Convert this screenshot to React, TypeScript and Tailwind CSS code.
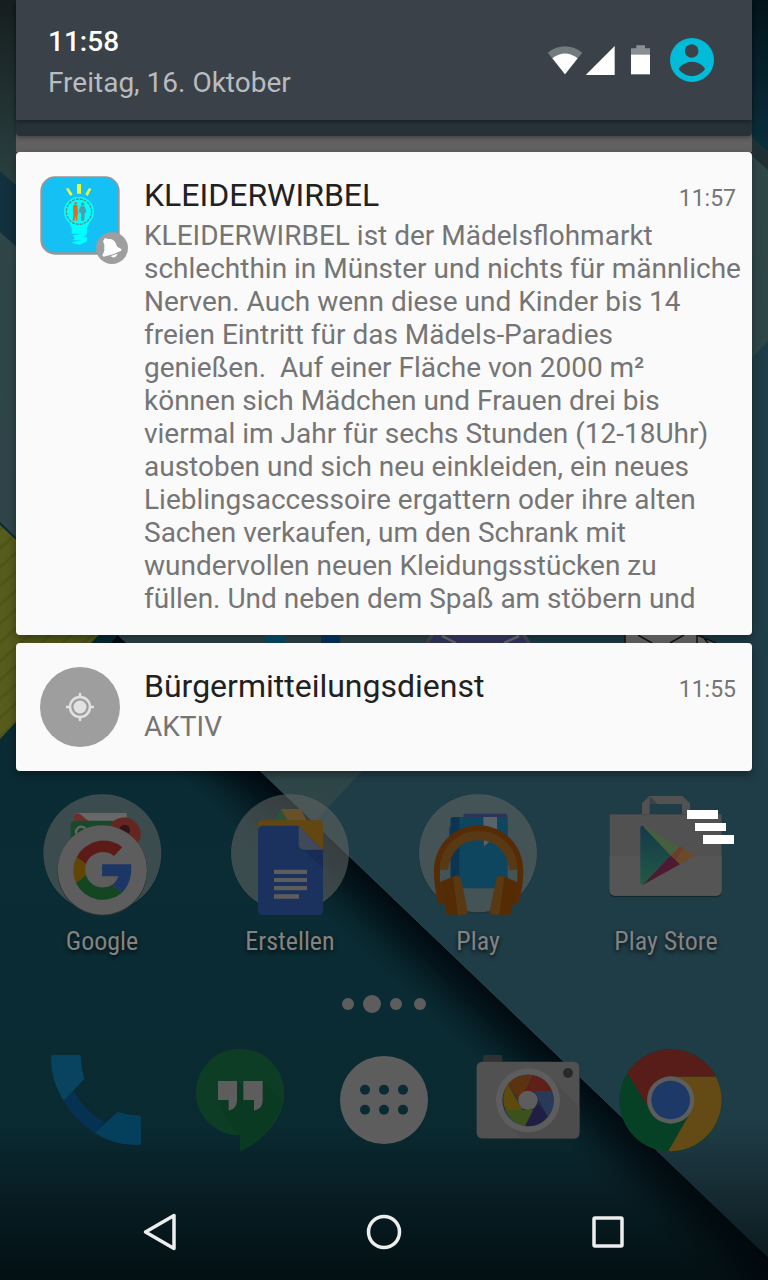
import type { ReactNode } from "react";

function Wallpaper() {
  return (
    <svg
      aria-hidden="true"
      className="absolute inset-0 h-full w-full"
      viewBox="0 0 768 1280"
      preserveAspectRatio="none"
    >
      <defs>
        <linearGradient id="wpTop" x1="0" y1="0" x2="0" y2="1">
          <stop offset="0" stopColor="#161e1f" />
          <stop offset="1" stopColor="#2d4444" />
        </linearGradient>
        <linearGradient id="wpLight" gradientUnits="userSpaceOnUse" x1="0" y1="220" x2="0" y2="820">
          <stop offset="0" stopColor="#2f4647" />
          <stop offset="0.6" stopColor="#2e444a" />
          <stop offset="1" stopColor="#2f4647" />
        </linearGradient>
        <linearGradient id="wpDeep" gradientUnits="userSpaceOnUse" x1="0" y1="740" x2="0" y2="1280">
          <stop offset="0" stopColor="#0a2b34" />
          <stop offset="0.25" stopColor="#0a2c34" />
          <stop offset="1" stopColor="#0a2931" />
        </linearGradient>
        <linearGradient id="wpShadow" gradientUnits="userSpaceOnUse" x1="443" y1="946" x2="401" y2="990">
          <stop offset="0" stopColor="#00080e" stopOpacity="0.92" />
          <stop offset="0.35" stopColor="#000a10" stopOpacity="0.65" />
          <stop offset="0.7" stopColor="#000a10" stopOpacity="0.2" />
          <stop offset="1" stopColor="#000a10" stopOpacity="0" />
        </linearGradient>
        <linearGradient id="wpFoot" gradientUnits="userSpaceOnUse" x1="0" y1="1120" x2="0" y2="1280">
          <stop offset="0" stopColor="#000608" stopOpacity="0" />
          <stop offset="1" stopColor="#000608" stopOpacity="0.72" />
        </linearGradient>
        <linearGradient id="wpRight" x1="0" y1="0" x2="0" y2="1">
          <stop offset="0" stopColor="#03131a" />
          <stop offset="1" stopColor="#0a2f3d" />
        </linearGradient>
        <pattern id="wpStripe" width="14" height="14" patternUnits="userSpaceOnUse" patternTransform="rotate(-42)">
          <rect width="14" height="14" fill="#565c1b" />
          <rect width="14" height="3" fill="#4e5517" />
        </pattern>
      </defs>
      <rect width="768" height="1280" fill="#1f3d47" />
      <path d="M0 0H768V341L752 358L314 822L0 522Z" fill="url(#wpLight)" />
      <path d="M0 0H40V206L16 185L0 171Z" fill="url(#wpTop)" />
      <path d="M0 171L40 206V268L0 232Z" fill="#12303d" />
      <path d="M730 0H768V152L730 118Z" fill="url(#wpRight)" />
      <path d="M768 152L730 118V136L768 170Z" fill="#1f3034" />
      <path d="M0 522L118 635L768 1257V1280H0Z" fill="url(#wpDeep)" />
      <path d="M118 635L768 1257V1280H660L60 700Z" fill="url(#wpShadow)" />
      <path d="M118 635L768 1257" stroke="#3b5962" strokeWidth="1" strokeOpacity="0.6" fill="none" />
      <path d="M0 525L108 625L0 739Z" fill="url(#wpStripe)" />
      <rect y="1120" width="768" height="160" fill="url(#wpFoot)" />
    </svg>
  );
}

function StatusIcons() {
  return (
    <svg role="img" aria-label="WLAN, Mobilfunk und Akku" className="h-[31px] w-[104px]" viewBox="141 134 312 93">
      <path d="M143 157Q195 119 247 157L195 222Z" fill="#747b7f" />
      <path d="M157 174Q195 145 233 174L195 222Z" fill="#fff" />
      <path d="M344 137V224H257Z" fill="#fff" />
      <path d="M393 144H409V135H435V144H450V164H393Z" fill="#8b8f93" />
      <rect x="393" y="163" width="57" height="59" fill="#fff" />
    </svg>
  );
}

function Avatar() {
  return (
    <svg aria-hidden="true" className="h-11 w-11" viewBox="510 114 132 132">
      <circle cx="576" cy="180" r="66" fill="#00bcd8" />
      <circle cx="575" cy="153" r="20.500" fill="#3a4148" />
      <path d="M536 207C543 194 560 185 576 185S608 194 615 207C606 220 592 228 576 228S545 220 536 207Z" fill="#3a4148" />
    </svg>
  );
}

function BulbIcon() {
  return (
    <svg aria-hidden="true" className="h-[90px] w-[90px]" viewBox="60 48 270 270">
      <rect x="61" y="49" width="238" height="235" rx="44" fill="#969696" />
      <rect x="67" y="53" width="227" height="224" rx="40" fill="#14c0f4" />
      <path d="M138 86L145 84L158 103L151 108ZM171 72H183V101H171ZM207 84L214 87L203 108L196 103Z" fill="#eaff3c" />
      <circle cx="177" cy="155" r="45" fill="#0ff" />
      <path d="M144 180L155 205V221H201V205L212 180Z" fill="#0ff" />
      <path d="M160 226L194 220L200 226L172 237L164 238ZM156 240L184 229L201 232V244L180 254L160 250L156 246L184 242Z" fill="#0ff" />
      <circle cx="177" cy="155" r="38" fill="none" stroke="#5b8d8f" strokeWidth="4" strokeDasharray="9 3" />
      <circle cx="167" cy="130" r="4" fill="#e66a1d" />
      <path d="M159 136L165 134H172L173 151L175 161L172 165V182H168L166 167L163 183H158L160 164Z" fill="#e66a1d" />
      <circle cx="188" cy="132" r="5" fill="#4e9ead" />
      <path d="M181 140L188 136L195 141L199 155L194 162L193 182H183L184 162L176 154Z" fill="#4e9ead" />
      <circle cx="276" cy="264" r="48" fill="#9e9e9e" />
      <path d="M249 244L255 234L264 237C276 236 285 241 289 254L292 260L304 267V272L281 282L251 290L247 286L253 272V254Z" fill="#fff" />
      <path d="M273 288L292 281C292 290 278 297 273 288Z" fill="#fff" />
    </svg>
  );
}

function LocationIcon() {
  return (
    <svg aria-hidden="true" className="h-20 w-20" viewBox="0 0 80 80">
      <circle cx="40" cy="40" r="40" fill="#9e9e9e" />
      <circle cx="40" cy="40" r="10" fill="none" stroke="#e2e2e2" strokeWidth="2.500" />
      <circle cx="40" cy="40" r="6.500" fill="#e2e2e2" />
      <path d="M40 26V31M40 49V54M26 40H31M49 40H54" stroke="#e2e2e2" strokeWidth="2.500" />
    </svg>
  );
}

type NoticeProps = { icon: ReactNode; title: string; time: string; children: ReactNode };

function Notice({ icon, title, time, children }: NoticeProps) {
  return (
    <article className="flex min-h-32 rounded-sm bg-[#fafafa] pt-[23px] pr-4 pb-5 pl-6 shadow-[0_4px_8px_rgba(0,0,0,0.35)]">
      <div className="w-[104px] shrink-0 pt-px">{icon}</div>
      <div className="min-w-0 flex-1">
        <div className="flex items-baseline justify-between">
          <h2 className="text-[32px] leading-10 text-[#212121]">{title}</h2>
          <time className="text-[23px] leading-8 text-[#757575]">{time}</time>
        </div>
        <p className="-mr-3 pt-1 text-[28px] leading-[33px] text-[#757575]">{children}</p>
      </div>
    </article>
  );
}

/* Icons of the upper home screen row, visible between two notifications. */
function PeekingIcons() {
  return (
    <svg aria-hidden="true" className="h-2 w-full" viewBox="16 635 736 8" preserveAspectRatio="none">
      <rect x="265" y="635" width="20" height="8" fill="#064257" />
      <rect x="321" y="635" width="19" height="8" fill="#052c50" />
      <path d="M426 643Q427 638 430 635H526L531 643Z" fill="#3b3f47" />
      <path d="M429 643L434 635H522L527 643Z" fill="#2d2f52" />
      <path d="M442 636L456 643M519 636L504 643" stroke="#5b5b5b" strokeWidth="2.500" />
      <path d="M625 635H697L716 643H625Z" fill="#5a5a5a" />
      <path d="M625 635V643M638 635L652 643M684 635L670 643M697 635V643M697 635L716 643M702 636L708 643" stroke="#111" strokeWidth="1.500" fill="none" />
    </svg>
  );
}

function FolderDisc({ cx }: { cx: number }) {
  return (
    <>
      <circle cx={cx} cy="223" r="178" fill="#000" fillOpacity="0.12" />
      <circle cx={cx} cy="220" r="177" fill="#6b6f6e" fillOpacity="0.52" />
    </>
  );
}

function GoogleFolder() {
  return (
    <svg aria-hidden="true" className="h-[124px] w-[120px]" viewBox="66 42 360 372">
      <FolderDisc cx={247} />
      <path d="M160 122V108Q162 99 174 99H320V130H160Z" fill="#686868" />
      <path d="M160 122V108Q166 96 180 102L206 124Z" fill="#6b2e2b" />
      <path d="M152 180V132Q153 122 164 122H300V200H152Z" fill="#174a2b" />
      <circle cx="184" cy="156" r="16" fill="none" stroke="#666" strokeWidth="7" />
      <path d="M268 140A49 49 0 1 1 357 184L330 200Z" fill="#652622" />
      <circle cx="314" cy="150" r="16" fill="#321514" />
      <circle cx="247" cy="272" r="135" fill="#2c3334" />
      <circle cx="247" cy="270" r="134" fill="#5d5d5d" />
      <path d="M170 232A89 89 0 0 1 307 202L282 228A53 53 0 0 0 198 252Z" fill="#5c1b17" />
      <path d="M170 232A88 88 0 0 0 168 309L198 286A54 54 0 0 1 198 252Z" fill="#604504" />
      <path d="M168 309A89 89 0 0 0 306 338L277 314A53 53 0 0 1 198 286Z" fill="#144621" />
      <path d="M246 253H333C337 285 328 317 306 338L277 314Q290 305 295 289H246Z" fill="#1c3665" />
    </svg>
  );
}

function DocsFolder() {
  return (
    <svg aria-hidden="true" className="h-[124px] w-[120px]" viewBox="630 42 360 372">
      <FolderDisc cx={810} />
      <path d="M762 126L783 87L805 126Z" fill="#2b533a" />
      <path d="M783 87H842L862 126H805Z" fill="#675128" />
      <rect x="714" y="121" width="195" height="160" rx="12" fill="#624711" />
      <path d="M730 137H836L909 209V390Q909 405 894 405H729Q714 405 714 390V152Q714 137 730 137Z" fill="#1c325e" />
      <path d="M850 209L909 266V209Z" fill="#182c55" />
      <path d="M836 137L909 209H854Q836 209 836 192Z" fill="#414958" />
      <path d="M762 269H861V282H762ZM762 294H861V306H762ZM762 318H861V331H762ZM762 343H837V356H762Z" fill="#5d5d5d" />
    </svg>
  );
}

function PlayFolder() {
  return (
    <svg aria-hidden="true" className="h-[124px] w-[120px]" viewBox="84 42 360 372">
      <FolderDisc cx={264} />
      <rect x="220" y="101" width="132" height="100" rx="6" fill="#2d3458" />
      <rect x="177" y="140" width="20" height="90" fill="#27365a" />
      <rect x="182" y="111" width="171" height="214" rx="8" fill="#0d465e" />
      <path d="M190 111H208V325H182V119Q182 111 190 111Z" fill="#0c3551" />
      <path d="M280 111H321V180L300 184L282 199Z" fill="#59636a" />
      <path d="M146 371C134 330 132 300 132 270A134 134 0 0 1 400 270C400 300 397 330 385 371H367L382 300V270A116 116 0 0 0 150 270V300L164 371Z" fill="#572b05" />
      <path d="M149 269A117 117 0 0 1 383 269H358C352 216 318 181 266 181S181 216 175 269Z" fill="#593914" />
      <path d="M151 306L192 289L205 404H178Q170 404 168 398Z" fill="#552b04" />
      <path d="M189 290Q210 282 214 300L233 394Q233 404 223 404H204Z" fill="#593914" />
      <path d="M381 306L340 289L327 404H354Q362 404 364 398Z" fill="#552b04" />
      <path d="M343 290Q322 282 318 300L299 394Q299 404 309 404H328Z" fill="#593914" />
    </svg>
  );
}

function PlayStoreIcon() {
  return (
    <svg aria-hidden="true" className="h-[124px] w-[120px]" viewBox="648 42 360 372">
      <defs>
        <linearGradient id="storeEdge" x1="0" y1="0" x2="0" y2="1">
          <stop offset="0" stopColor="#143849" />
          <stop offset="1" stopColor="#235a46" />
        </linearGradient>
      </defs>
      <path d="M756 103V70L779 48H877L900 70V103H876V72H779V103Z" fill="#525252" />
      <path d="M779 48L802 72H779Z" fill="#404040" />
      <path d="M659 103H995V333Q995 352 978 352H676Q659 352 659 333Z" fill="#142a31" />
      <path d="M659 103H995V330Q995 347 978 347H676Q659 347 659 330Z" fill="#515151" />
      <path d="M659 228H995V330Q995 347 978 347H676Q659 347 659 330Z" fill="#555" />
      <path d="M751 144Q751 136 760 138L845 226L759 315Q751 314 751 309Z" fill="url(#storeEdge)" />
      <path d="M758 138L870 200L843 228Z" fill="#45603f" />
      <path d="M758 315L870 253L843 226Z" fill="#4e1933" />
      <path d="M870 200L908 221Q914 227 908 232L870 253L843 227Z" fill="#6a4a2b" />
      <path d="M870 200L880 206L856 240L843 227Z" fill="#6b3d2b" />
    </svg>
  );
}

function PhoneIcon() {
  return (
    <svg aria-hidden="true" className="h-[108px] w-[108px]" viewBox="66 201 324 324">
      <path d="M161 334Q198 398 254 427L224 459Q165 422 131 363Z" fill="#053253" />
      <path d="M100 225H176Q183 226 183 233Q183 265 193 296L131 363Q92 300 93 233Q93 226 100 225Z" fill="#08445f" />
      <path d="M224 459L293 395Q325 406 355 406Q363 407 363 414V487Q363 495 354 495Q284 497 224 459Z" fill="#04405c" />
    </svg>
  );
}

function HangoutsIcon() {
  return (
    <svg aria-hidden="true" className="h-[108px] w-[108px]" viewBox="498 201 324 324">
      <path d="M660 206A133 133 0 0 1 793 339C793 410 735 480 660 514V466A130 130 0 0 1 527 339A133 133 0 0 1 660 206Z" fill="#0e3d25" />
      <path d="M651 303L670 322V303H728L788 363C770 423 722 484 660 514V466L625 428L594 360H651Z" fill="#0b3a23" />
      <path d="M594 303H651V360Q651 388 626 392V360H594ZM670 303H728V360Q728 388 702 392V360H670Z" fill="#5d5d5d" />
    </svg>
  );
}

function AllAppsIcon() {
  return (
    <svg aria-hidden="true" className="h-[108px] w-[108px]" viewBox="-150 201 324 324">
      <circle cx="12" cy="360" r="132" fill="#5d5d5d" />
      {[-45, 12, 69].map((x) =>
        [329, 389].map((y) => <circle key={`${x}-${y}`} cx={x} cy={y} r="15" fill="#0a2b34" />),
      )}
    </svg>
  );
}

function CameraIcon() {
  return (
    <svg aria-hidden="true" className="h-[108px] w-[108px]" viewBox="282 201 324 324">
      <path d="M309 250V234Q310 225 319 225H359Q367 226 367 234V250Z" fill="#2e3132" />
      <rect x="290" y="247" width="309" height="231" rx="17" fill="#272e31" />
      <rect x="290" y="245" width="308" height="230" rx="17" fill="#515151" />
      <path d="M512 295L598 380V458Q598 475 581 475H425L375 425Z" fill="#4c4c4c" />
      <circle cx="564" cy="279" r="15" fill="#292929" />
      <circle cx="444" cy="361" r="96" fill="#5d5d5d" />
      <circle cx="444" cy="361" r="77" fill="#242d4d" />
      <path d="M458 285A77 77 0 0 1 516 333H436Z" fill="#5e2119" />
      <path d="M384 313A77 77 0 0 1 458 285L420 366Z" fill="#5d3211" />
      <path d="M377 390A77 77 0 0 1 384 313L428 390Z" fill="#5d4a0c" />
      <path d="M436 438A77 77 0 0 1 375 390H464Z" fill="#3d511e" />
      <path d="M504 410A77 77 0 0 1 435 438L472 366Z" fill="#211e43" />
      <path d="M516 333A77 77 0 0 1 504 410L462 333Z" fill="#283a5a" />
      <circle cx="444" cy="361" r="29" fill="#5d5d5d" />
    </svg>
  );
}

function ChromeIcon() {
  return (
    <svg aria-hidden="true" className="h-[108px] w-[108px]" viewBox="714 201 324 324">
      <circle cx="872" cy="361" r="154" fill="#064125" />
      <path d="M742 279A154 154 0 0 1 1008 290H872L805 382Z" fill="#581d18" />
      <path d="M1008 290A154 154 0 0 1 865 514L932 396L872 290Z" fill="#644b15" />
      <circle cx="872" cy="360" r="71" fill="#5d5d5d" />
      <circle cx="872" cy="360" r="58" fill="#1d3968" />
    </svg>
  );
}

const apps = [
  { name: "Google", icon: <GoogleFolder /> },
  { name: "Erstellen", icon: <DocsFolder /> },
  { name: "Play", icon: <PlayFolder /> },
  { name: "Play Store", icon: <PlayStoreIcon /> },
];

const dock = [
  { name: "Telefon", icon: <PhoneIcon /> },
  { name: "Hangouts", icon: <HangoutsIcon /> },
  { name: "Alle Apps", icon: <AllAppsIcon /> },
  { name: "Kamera", icon: <CameraIcon /> },
  { name: "Chrome", icon: <ChromeIcon /> },
];

export default function App() {
  return (
    <div className="relative flex min-h-screen flex-col overflow-hidden bg-[#0a2b34] font-['Roboto',sans-serif]">
      <Wallpaper />

      <section className="relative mx-4">
        <div className="bg-[#616161]">
          <div className="rounded-b-sm bg-[#263238] pb-4 shadow-[0_2px_4px_rgba(0,0,0,0.3)]">
            <header className="flex h-[120px] items-center justify-between bg-[#3a4148] pr-[38px] pl-8 shadow-[0_2px_4px_rgba(0,0,0,0.35)]">
              <div className="pt-1 text-[28px] leading-[41px]">
                <div className="font-medium text-white">11:58</div>
                <div className="text-[#b9bcbf]">Freitag, 16. Oktober</div>
              </div>
              <div className="flex items-center gap-[19px]">
                <StatusIcons />
                <button type="button" aria-label="Nutzerprofil">
                  <Avatar />
                </button>
              </div>
            </header>
          </div>
          <div className="h-4" />
        </div>

        <div className="relative">
          <Notice icon={<BulbIcon />} title="KLEIDERWIRBEL" time="11:57">
            KLEIDERWIRBEL ist der Mädelsflohmarkt schlechthin in Münster und nichts für männliche
            Nerven. Auch wenn diese und Kinder bis 14 freien Eintritt für das Mädels-Paradies
            genießen.&nbsp; Auf einer Fläche von 2000 m²
            <br />
            können sich Mädchen und Frauen drei bis viermal im Jahr für sechs Stunden (12-18Uhr)
            austoben und sich neu einkleiden, ein neues Lieblingsaccessoire ergattern oder ihre
            alten Sachen verkaufen, um den Schrank mit wundervollen neuen Kleidungsstücken zu
            <br />
            füllen. Und neben dem Spaß am stöbern und
          </Notice>
          <div className="flex">
            <PeekingIcons />
          </div>
          <Notice icon={<LocationIcon />} title="Bürgermitteilungsdienst" time="11:55">
            AKTIV
          </Notice>
          <button
            type="button"
            aria-label="Alle Benachrichtigungen löschen"
            className="absolute top-full right-4 z-10 mt-[37px] p-0.5"
          >
            <svg className="h-[34px] w-12" viewBox="0 0 48 34" fill="#fff" aria-hidden="true">
              <path d="M1 0H32V9H1ZM9 13H40V21H9ZM17 25H48V34H17Z" />
            </svg>
          </button>
        </div>
      </section>

      <main className="relative mt-[23px] flex flex-1 flex-col">
        <nav aria-label="Apps" className="grid grid-cols-4 px-2">
          {apps.map((app) => (
            <a key={app.name} href={`#${app.name}`} className="flex flex-col items-center gap-2">
              {app.icon}
              <span className="font-['Roboto_Condensed','Liberation_Sans_Narrow','Roboto',sans-serif] text-[26px] leading-[30px] whitespace-nowrap text-[#838383] [text-shadow:0_2px_4px_rgba(0,0,0,0.8)]">
                {app.name}
              </span>
            </a>
          ))}
        </nav>

        <div className="mt-[39px] flex h-[18px] items-center justify-center gap-3">
          <span className="h-3 w-3 rounded-full bg-[#5d5d5d]" />
          <span className="-mx-[3px] h-[18px] w-[18px] rounded-full bg-[#5d5d5d]" />
          <span className="h-3 w-3 rounded-full bg-[#5d5d5d]" />
          <span className="h-3 w-3 rounded-full bg-[#5d5d5d]" />
        </div>

        <nav aria-label="Favoriten" className="mt-[34px] grid grid-cols-5 px-6">
          {dock.map((item) => (
            <a key={item.name} href={`#${item.name}`} aria-label={item.name} className="flex justify-center">
              {item.icon}
            </a>
          ))}
        </nav>
      </main>

      <footer className="relative grid h-24 grid-cols-3 items-center px-12">
        <button type="button" aria-label="Zurück" className="flex justify-center">
          <svg className="h-10 w-10" viewBox="0 0 40 40" fill="none" stroke="#ededed" strokeWidth="3.500" strokeLinejoin="round" aria-hidden="true">
            <path d="M34 3.500V36.500L5.500 20Z" />
          </svg>
        </button>
        <button type="button" aria-label="Startbildschirm" className="flex justify-center">
          <svg className="h-10 w-10" viewBox="0 0 40 40" fill="none" stroke="#ededed" strokeWidth="3.500" aria-hidden="true">
            <circle cx="20" cy="20" r="15.500" />
          </svg>
        </button>
        <button type="button" aria-label="Letzte Apps" className="flex justify-center">
          <svg className="h-10 w-10" viewBox="0 0 40 40" fill="none" stroke="#ededed" strokeWidth="3.500" aria-hidden="true">
            <rect x="6" y="6" width="28" height="28" rx="1" />
          </svg>
        </button>
      </footer>
    </div>
  );
}
